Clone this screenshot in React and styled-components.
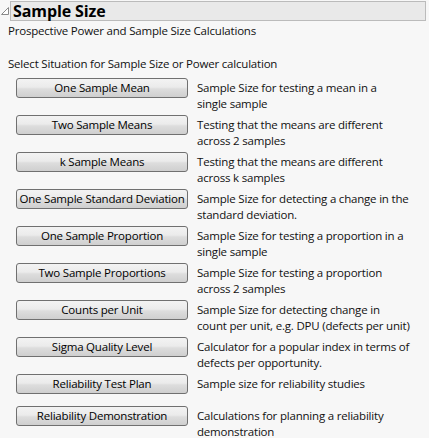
import styled, { createGlobalStyle } from "styled-components";

const GlobalStyle = createGlobalStyle`
  body {
    margin: 0;
    background: #f7f7f7;
    font-family: "Open Sans", "Noto Sans", sans-serif;
    font-size: 11.5px;
    letter-spacing: -0.2px;
    color: #111;
  }
`;

const Page = styled.div`
  padding: 1px 3px 0 1px;
`;

const HeaderRow = styled.div`
  display: flex;
  align-items: flex-start;
  gap: 1px;
`;

const Toggle = styled.svg`
  width: 8px;
  height: 8px;
  margin-top: 6px;
  flex: none;
`;

const TitleBar = styled.div`
  flex: 1;
  height: 18px;
  background: #e9e9e9;
  border: 1px solid #bbb;
  padding-left: 2px;
  font-weight: 700;
  font-size: 16px;
  letter-spacing: -0.1px;
  line-height: 18px;
  color: #000;
`;

const Body = styled.div`
  padding-left: 7px;
`;

const Note = styled.div`
  line-height: 16px;
  margin-top: ${(p) => p.top}px;
`;

const Table = styled.div`
  display: grid;
  grid-template-columns: 172px 1fr;
  column-gap: 9px;
  row-gap: 5px;
  margin-top: 8px;
  padding-left: 8px;
`;

const Button = styled.button`
  height: 20px;
  width: 172px;
  padding: 0;
  border: 1px solid #707070;
  border-radius: 3px;
  background: linear-gradient(#f3f3f3, #ebebeb 45%, #dddddd 55%, #cfcfcf);
  font-family: inherit;
  font-size: 11.5px;
  letter-spacing: -0.2px;
  white-space: nowrap;
  color: #000;
  line-height: 18px;
  margin-top: -2px;
  align-self: start;
`;

const Desc = styled.div`
  line-height: 16px;
  min-height: ${(p) => (p.single ? 27 : 32)}px;
  white-space: nowrap;
`;

const rows = [
  ["One Sample Mean", "Sample Size for testing a mean in a", "single sample"],
  ["Two Sample Means", "Testing that the means are different", "across 2 samples"],
  ["k Sample Means", "Testing that the means are different", "across k samples"],
  ["One Sample Standard Deviation", "Sample Size for detecting a change in the", "standard deviation."],
  ["One Sample Proportion", "Sample Size for testing a proportion in a", "single sample"],
  ["Two Sample Proportions", "Sample Size for testing a proportion", "across 2 samples"],
  ["Counts per Unit", "Sample Size for detecting change in", "count per unit, e.g. DPU (defects per unit)"],
  ["Sigma Quality Level", "Calculator for a popular index in terms of", "defects per opportunity."],
  ["Reliability Test Plan", "Sample size for reliability studies"],
  ["Reliability Demonstration", "Calculations for planning a reliability", "demonstration"],
];

export default function App() {
  return (
    <>
      <GlobalStyle />
      <Page>
        <HeaderRow>
          <Toggle viewBox="0 0 8 8">
            <polygon points="7.5,0.5 7.5,7.5 0.5,7.5" fill="#fff" stroke="#8a8a8a" strokeWidth="1" />
          </Toggle>
          <TitleBar>Sample Size</TitleBar>
        </HeaderRow>
        <Body>
          <Note top={2}>Prospective Power and Sample Size Calculations</Note>
          <Note top={17}>Select Situation for Sample Size or Power calculation</Note>
          <Table>
            {rows.map(([label, a, b]) => (
              <>
                <Button key={label + "b"}>{label}</Button>
                <Desc key={label + "d"} single={!b}>
                  {a}
                  {b && <br />}
                  {b}
                </Desc>
              </>
            ))}
          </Table>
        </Body>
      </Page>
    </>
  );
}
